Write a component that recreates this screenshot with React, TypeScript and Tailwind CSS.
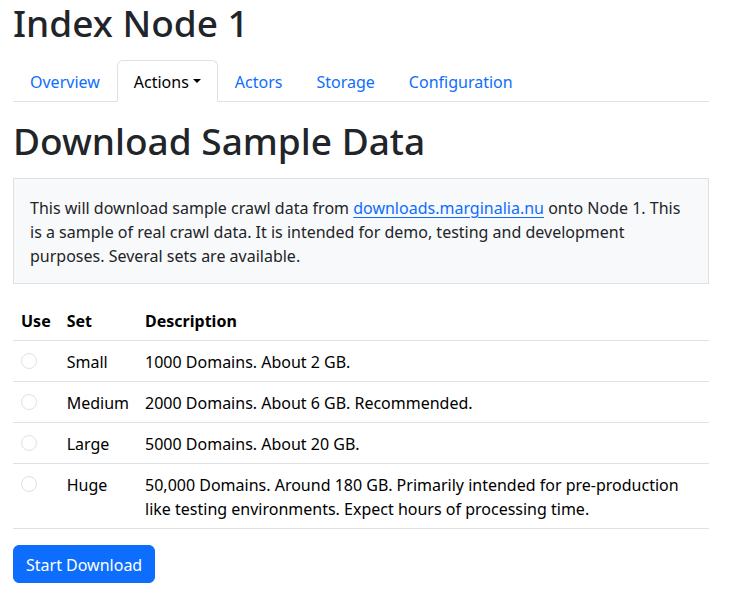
import React, { useState } from "react";

const sets = [
  { id: "small", name: "Small", description: "1000 Domains. About 2 GB." },
  { id: "medium", name: "Medium", description: "2000 Domains. About 6 GB. Recommended." },
  { id: "large", name: "Large", description: "5000 Domains. About 20 GB." },
  {
    id: "huge",
    name: "Huge",
    description:
      "50,000 Domains. Around 180 GB. Primarily intended for pre-production like testing environments. Expect hours of processing time.",
  },
];

const tabClass =
  "-mb-px block rounded-t-md border border-transparent px-4 pt-[9px] pb-[7px] text-[#0d6efd]";
const headingClass = "text-[37px] font-medium leading-[46px]";
const cellClass = "px-2 pt-[9px] pb-[7px]";

function Tabs() {
  return (
    <nav className="mt-3.5 flex border-b border-[#dee2e6]">
      <a href="#overview" className={tabClass}>Overview</a>
      <button
        type="button"
        aria-haspopup="menu"
        className="-mb-px flex items-center gap-1 rounded-t-md border border-[#dee2e6] border-b-white bg-white px-4 pt-[9px] pb-[7px] text-black"
      >
        Actions
        <span className="mb-0.5 border-x-4 border-t-4 border-x-transparent border-t-black" />
      </button>
      <a href="#actors" className={tabClass}>Actors</a>
      <a href="#storage" className={tabClass}>Storage</a>
      <a href="#configuration" className={tabClass}>Configuration</a>
    </nav>
  );
}

export default function App() {
  const [selected, setSelected] = useState("");
  return (
    <main className="bg-white pl-[13px] pr-[21px] font-['Noto_Sans',sans-serif] text-base text-[#212529]">
      <h1 className={headingClass}>Index Node 1</h1>
      <Tabs />
      <h1 className={`mt-4 ${headingClass}`}>Download Sample Data</h1>
      <p className="mt-3.5 border border-[#dee2e6] bg-[#f8f9fa] px-4 pt-[17px] pb-[15px]">
        This will download sample crawl data from{" "}
        <a href="#downloads" className="text-[#0d6efd] underline underline-offset-3">downloads.marginalia.nu</a>{" "}
        onto Node 1. This is a sample of real crawl data. It is intended for demo, testing and
        development purposes. Several sets are available.
      </p>
      <form onSubmit={(e) => e.preventDefault()}>
        <table className="mt-4 w-full text-left text-black">
          <thead>
            <tr className="border-b border-[#dee2e6]">
              <th className={`${cellClass} font-bold`}>Use</th>
              <th className={`${cellClass} font-bold`}>Set</th>
              <th className={`${cellClass} font-bold`}>Description</th>
            </tr>
          </thead>
          <tbody>
            {sets.map((s) => (
              <tr key={s.id} className="border-b border-[#dee2e6] align-top">
                <td className={cellClass}>
                  <input
                    id={s.id}
                    type="radio"
                    name="set"
                    value={s.id}
                    checked={selected === s.id}
                    onChange={() => setSelected(s.id)}
                    className="mt-[3px] block size-4 appearance-none rounded-full border border-[#dee2e6] bg-white checked:border-[5px] checked:border-[#0d6efd]"
                  />
                </td>
                <td className={cellClass}><label htmlFor={s.id}>{s.name}</label></td>
                <td className={cellClass}>{s.description}</td>
              </tr>
            ))}
          </tbody>
        </table>
        <button
          type="submit"
          className="mt-4 rounded-md border border-[#0d6efd] bg-[#0d6efd] px-3 pt-[7px] pb-[5px] text-white"
        >
          Start Download
        </button>
      </form>
    </main>
  );
}
